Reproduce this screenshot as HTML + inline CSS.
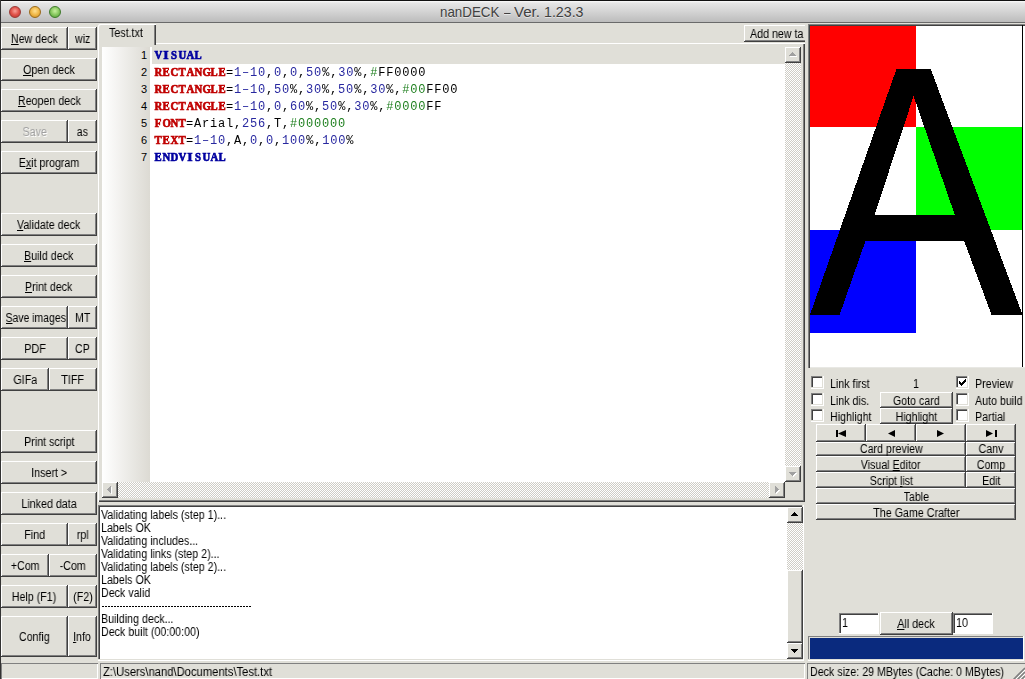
<!DOCTYPE html><html><head><meta charset="utf-8"><style>
*{box-sizing:border-box}
html,body{margin:0;padding:0;width:1025px;height:679px;overflow:hidden;-webkit-font-smoothing:antialiased;background:#e0dfd8;font-family:"Liberation Sans",sans-serif;font-size:12px;color:#000}
.b,.t,.cb,.p{position:absolute}
.t,.s,.code{will-change:transform}
.b{background:#e0dfd8;text-align:center;padding-top:1px;white-space:nowrap;overflow:hidden;
box-shadow:inset -1px -1px #404040, inset 1px 1px #fff, inset -2px -2px #808080}
.b u{text-decoration:underline;text-underline-offset:1px}
.s{display:inline-block;transform:scaleX(0.89);transform-origin:50% 50%}
.dis{color:#a0a0a0;text-shadow:1px 1px #fff}
.t{white-space:nowrap;transform:scaleX(0.89);transform-origin:0 0}
.cb{width:13px;height:13px;background:#fff;box-shadow:inset -1px -1px #fff, inset -2px -2px #e0dfd8, inset 1px 1px #808080, inset 2px 2px #404040}
.code{font-family:"Liberation Mono",monospace;font-size:12px;letter-spacing:0.8px;position:absolute;white-space:pre;line-height:17px}
.kw i{font-style:normal;display:inline-block;width:8px;text-align:center;font-family:"Liberation Serif",serif;font-weight:bold;font-size:12.5px;letter-spacing:0;-webkit-text-stroke:0.7px currentColor;transform:scaleX(0.86);vertical-align:top;line-height:17px;position:relative;top:-1px}
</style></head><body>
<div class="b" style="left:1px;top:27px;width:67px;height:23px;line-height:23px;"><span class="s"><u>N</u>ew deck</span></div>
<div class="b" style="left:68px;top:27px;width:29px;height:23px;line-height:23px;"><span class="s">wiz</span></div>
<div class="b" style="left:1px;top:58px;width:96px;height:23px;line-height:23px;"><span class="s"><u>O</u>pen deck</span></div>
<div class="b" style="left:1px;top:89px;width:96px;height:23px;line-height:23px;"><span class="s"><u>R</u>eopen deck</span></div>
<div class="b dis" style="left:1px;top:120px;width:67px;height:23px;line-height:23px;"><span class="s">Save</span></div>
<div class="b" style="left:68px;top:120px;width:29px;height:23px;line-height:23px;"><span class="s">as</span></div>
<div class="b" style="left:1px;top:151px;width:96px;height:23px;line-height:23px;"><span class="s">E<u>x</u>it program</span></div>
<div class="b" style="left:1px;top:213px;width:96px;height:23px;line-height:23px;"><span class="s"><u>V</u>alidate deck</span></div>
<div class="b" style="left:1px;top:244px;width:96px;height:23px;line-height:23px;"><span class="s"><u>B</u>uild deck</span></div>
<div class="b" style="left:1px;top:275px;width:96px;height:23px;line-height:23px;"><span class="s"><u>P</u>rint deck</span></div>
<div class="b" style="left:1px;top:306px;width:67px;height:23px;line-height:23px;"><span class="s" style="transform:scaleX(0.87)"><u>S</u>ave images</span></div>
<div class="b" style="left:68px;top:306px;width:29px;height:23px;line-height:23px;"><span class="s">MT</span></div>
<div class="b" style="left:1px;top:337px;width:67px;height:23px;line-height:23px;"><span class="s">PDF</span></div>
<div class="b" style="left:68px;top:337px;width:29px;height:23px;line-height:23px;"><span class="s">CP</span></div>
<div class="b" style="left:1px;top:368px;width:48px;height:23px;line-height:23px;"><span class="s">GIFa</span></div>
<div class="b" style="left:49px;top:368px;width:48px;height:23px;line-height:23px;"><span class="s">TIFF</span></div>
<div class="b" style="left:1px;top:430px;width:96px;height:23px;line-height:23px;"><span class="s">Print script</span></div>
<div class="b" style="left:1px;top:461px;width:96px;height:23px;line-height:23px;"><span class="s">Insert &gt;</span></div>
<div class="b" style="left:1px;top:492px;width:96px;height:23px;line-height:23px;"><span class="s">Linked data</span></div>
<div class="b" style="left:1px;top:523px;width:67px;height:23px;line-height:23px;"><span class="s">Find</span></div>
<div class="b" style="left:68px;top:523px;width:29px;height:23px;line-height:23px;"><span class="s">rpl</span></div>
<div class="b" style="left:1px;top:554px;width:48px;height:23px;line-height:23px;"><span class="s">+Com</span></div>
<div class="b" style="left:49px;top:554px;width:48px;height:23px;line-height:23px;"><span class="s">-Com</span></div>
<div class="b" style="left:1px;top:585px;width:67px;height:23px;line-height:23px;"><span class="s">Help (F1)</span></div>
<div class="b" style="left:68px;top:585px;width:29px;height:23px;line-height:23px;"><span class="s">(F2)</span></div>
<div class="b" style="left:1px;top:616px;width:67px;height:41px;line-height:41px;"><span class="s">Config</span></div>
<div class="b" style="left:68px;top:616px;width:29px;height:41px;line-height:41px;"><span class="s"><u>I</u>nfo</span></div>
<div class="p" style="left:0;top:0;width:1025px;height:23px;background:linear-gradient(#fbfbfb 0,#e6e6e6 2px,#d4d4d4 50%,#bcbcbc 100%);border-top:1px solid #111;border-bottom:1px solid #6a6a6a"></div>
<div class="p" style="left:0;top:0;width:1px;height:679px;background:#333"></div>
<div class="p" style="left:9px;top:6px;width:12px;height:12px;border-radius:50%;border:1px solid #9a3a36;background:radial-gradient(circle at 50% 40%,#f8a098 0,#e0524a 50%,#b8302a 100%)"></div>
<div class="p" style="left:29px;top:6px;width:12px;height:12px;border-radius:50%;border:1px solid #9a6a1a;background:radial-gradient(circle at 50% 40%,#ffe090 0,#f0b848 50%,#c88a20 100%)"></div>
<div class="p" style="left:49px;top:6px;width:12px;height:12px;border-radius:50%;border:1px solid #3e7a2a;background:radial-gradient(circle at 50% 40%,#c8f0a0 0,#88c860 50%,#4c9a34 100%)"></div>
<div style="position:absolute;top:4px;font-size:14.5px;color:#404040;white-space:nowrap;text-shadow:0 1px rgba(255,255,255,.55);transform-origin:0 0;left:440px;transform:scaleX(0.92)">nanDECK</div><div style="position:absolute;top:4px;font-size:14.5px;color:#404040;white-space:nowrap;text-shadow:0 1px rgba(255,255,255,.55);transform-origin:0 0;left:504px;transform:scaleX(0.8)">–</div><div style="position:absolute;top:4px;font-size:14.5px;color:#404040;white-space:nowrap;text-shadow:0 1px rgba(255,255,255,.55);transform-origin:0 0;left:514px;transform:scaleX(1.04)">Ver.</div><div style="position:absolute;top:4px;font-size:14.5px;color:#404040;white-space:nowrap;text-shadow:0 1px rgba(255,255,255,.55);transform-origin:0 0;left:544px;transform:scaleX(0.98)">1.23.3</div>

<div class="p" style="left:98px;top:43px;width:707px;height:459px;box-shadow:inset 1px 1px #fff, inset -1px -1px #404040, inset -2px -2px #808080"></div>
<div class="p" style="left:98px;top:24px;width:58px;height:21px;border-top-left-radius:2px;background:#e0dfd8;box-shadow:inset 1px 1px #fff, inset -1px 0 #404040, inset -2px 0 #808080"></div>
<div class="t" style="left:109px;top:26px">Test.txt</div>

<div class="p" style="left:744px;top:25px;width:61px;height:17px;overflow:hidden"><div class="b" style="left:0;top:0;width:75px;height:17px;line-height:17px;text-align:left;padding-left:6px"><span class="s" style="transform-origin:0 50%">Add new ta</span></div></div>
<div class="p" style="left:102px;top:47px;width:683px;height:435px;background:#fff"></div>
<div class="p" style="left:102px;top:47px;width:48px;height:435px;background:linear-gradient(90deg,#fff,#dcdad3)"></div>
<div class="p" style="left:152px;top:47px;width:633px;height:17px;background:#e0dfd8"></div>

<div class="p" style="left:120px;top:47px;width:27px;text-align:right;font-size:11px;line-height:17px">1</div>
<div class="p" style="left:120px;top:64px;width:27px;text-align:right;font-size:11px;line-height:17px">2</div>
<div class="p" style="left:120px;top:81px;width:27px;text-align:right;font-size:11px;line-height:17px">3</div>
<div class="p" style="left:120px;top:98px;width:27px;text-align:right;font-size:11px;line-height:17px">4</div>
<div class="p" style="left:120px;top:115px;width:27px;text-align:right;font-size:11px;line-height:17px">5</div>
<div class="p" style="left:120px;top:132px;width:27px;text-align:right;font-size:11px;line-height:17px">6</div>
<div class="p" style="left:120px;top:149px;width:27px;text-align:right;font-size:11px;line-height:17px">7</div>
<div class="code" style="left:154px;top:48px"><span class="kw" style="color:#0000a0"><i>V</i><i style="transform:scaleX(1.1)">I</i><i>S</i><i>U</i><i>A</i><i>L</i></span>
<span class="kw" style="color:#c00000"><i>R</i><i>E</i><i>C</i><i>T</i><i>A</i><i>N</i><i>G</i><i>L</i><i>E</i></span>=<span style="color:#2828a0">1–10</span>,<span style="color:#2828a0">0</span>,<span style="color:#2828a0">0</span>,<span style="color:#2828a0">50</span>%,<span style="color:#2828a0">30</span>%,<span style="color:#208020">#</span>FF0000
<span class="kw" style="color:#c00000"><i>R</i><i>E</i><i>C</i><i>T</i><i>A</i><i>N</i><i>G</i><i>L</i><i>E</i></span>=<span style="color:#2828a0">1–10</span>,<span style="color:#2828a0">50</span>%,<span style="color:#2828a0">30</span>%,<span style="color:#2828a0">50</span>%,<span style="color:#2828a0">30</span>%,<span style="color:#208020">#00</span>FF00
<span class="kw" style="color:#c00000"><i>R</i><i>E</i><i>C</i><i>T</i><i>A</i><i>N</i><i>G</i><i>L</i><i>E</i></span>=<span style="color:#2828a0">1–10</span>,<span style="color:#2828a0">0</span>,<span style="color:#2828a0">60</span>%,<span style="color:#2828a0">50</span>%,<span style="color:#2828a0">30</span>%,<span style="color:#208020">#0000</span>FF
<span class="kw" style="color:#c00000"><i>F</i><i>O</i><i>N</i><i>T</i></span>=Arial,<span style="color:#2828a0">256</span>,T,<span style="color:#208020">#000000</span>
<span class="kw" style="color:#c00000"><i>T</i><i>E</i><i>X</i><i>T</i></span>=<span style="color:#2828a0">1–10</span>,A,<span style="color:#2828a0">0</span>,<span style="color:#2828a0">0</span>,<span style="color:#2828a0">100</span>%,<span style="color:#2828a0">100</span>%
<span class="kw" style="color:#0000a0"><i>E</i><i>N</i><i>D</i><i>V</i><i style="transform:scaleX(1.1)">I</i><i>S</i><i>U</i><i>A</i><i>L</i></span></div>
<div class="p" style="left:785px;top:47px;width:16px;height:435px;background-color:#e8e7e2;background-image:repeating-conic-gradient(#cfcdc6 0 25%, #fff 0 50%);background-size:2px 2px"></div>
<div class="p" style="left:102px;top:482px;width:683px;height:16px;background-color:#e8e7e2;background-image:repeating-conic-gradient(#cfcdc6 0 25%, #fff 0 50%);background-size:2px 2px"></div>
<div class="p" style="left:785px;top:482px;width:16px;height:16px;background:#e0dfd8"></div>
<div class="b" style="left:785px;top:47px;width:16px;height:16px"><svg width="16" height="16" style="position:absolute;left:0;top:0" shape-rendering="crispEdges"><g fill="#fff"><rect x="8" y="6" width="1" height="1"/><rect x="7" y="7" width="3" height="1"/><rect x="6" y="8" width="5" height="1"/><rect x="5" y="9" width="7" height="1"/></g><g fill="#a0a0a0"><rect x="7" y="5" width="1" height="1"/><rect x="6" y="6" width="3" height="1"/><rect x="5" y="7" width="5" height="1"/><rect x="4" y="8" width="7" height="1"/></g></svg></div>
<div class="b" style="left:785px;top:466px;width:16px;height:16px"><svg width="16" height="16" style="position:absolute;left:0;top:0" shape-rendering="crispEdges"><g fill="#fff"><rect x="8" y="10" width="1" height="1"/><rect x="7" y="9" width="3" height="1"/><rect x="6" y="8" width="5" height="1"/><rect x="5" y="7" width="7" height="1"/></g><g fill="#a0a0a0"><rect x="7" y="9" width="1" height="1"/><rect x="6" y="8" width="3" height="1"/><rect x="5" y="7" width="5" height="1"/><rect x="4" y="6" width="7" height="1"/></g></svg></div>
<div class="b" style="left:102px;top:482px;width:16px;height:16px"><svg width="16" height="16" style="position:absolute;left:0;top:0" shape-rendering="crispEdges"><g fill="#fff"><rect x="6" y="8" width="1" height="1"/><rect x="7" y="7" width="1" height="3"/><rect x="8" y="6" width="1" height="5"/><rect x="9" y="5" width="1" height="7"/></g><g fill="#a0a0a0"><rect x="5" y="7" width="1" height="1"/><rect x="6" y="6" width="1" height="3"/><rect x="7" y="5" width="1" height="5"/><rect x="8" y="4" width="1" height="7"/></g></svg></div>
<div class="b" style="left:769px;top:482px;width:16px;height:16px"><svg width="16" height="16" style="position:absolute;left:0;top:0" shape-rendering="crispEdges"><g fill="#fff"><rect x="10" y="8" width="1" height="1"/><rect x="9" y="7" width="1" height="3"/><rect x="8" y="6" width="1" height="5"/><rect x="7" y="5" width="1" height="7"/></g><g fill="#a0a0a0"><rect x="9" y="7" width="1" height="1"/><rect x="8" y="6" width="1" height="3"/><rect x="7" y="5" width="1" height="5"/><rect x="6" y="4" width="1" height="7"/></g></svg></div>
<div class="p" style="left:98px;top:505px;width:706px;height:156px;background:#fff;box-shadow:inset -1px -1px #fff, inset -2px -2px #e0dfd8, inset 1px 1px #808080, inset 2px 2px #404040"></div>
<div class="t" style="left:101px;top:509px;line-height:13px">Validating labels (step 1)...</div>
<div class="t" style="left:101px;top:522px;line-height:13px">Labels OK</div>
<div class="t" style="left:101px;top:535px;line-height:13px">Validating includes...</div>
<div class="t" style="left:101px;top:548px;line-height:13px">Validating links (step 2)...</div>
<div class="t" style="left:101px;top:561px;line-height:13px">Validating labels (step 2)...</div>
<div class="t" style="left:101px;top:574px;line-height:13px">Labels OK</div>
<div class="t" style="left:101px;top:587px;line-height:13px">Deck valid</div>
<div class="t" style="left:101px;top:600px;line-height:13px"></div>
<div class="t" style="left:101px;top:613px;line-height:13px">Building deck...</div>
<div class="t" style="left:101px;top:626px;line-height:13px">Deck built (00:00:00)</div>
<div class="p" style="left:102px;top:606px;width:149px;height:1px;background:repeating-linear-gradient(90deg,#000 0 2px,transparent 2px 3px)"></div>
<div class="p" style="left:787px;top:523px;width:16px;height:120px;background-color:#e8e7e2;background-image:repeating-conic-gradient(#cfcdc6 0 25%, #fff 0 50%);background-size:2px 2px"></div>
<div class="b" style="left:787px;top:570px;width:16px;height:73px"></div>
<div class="b" style="left:787px;top:507px;width:16px;height:16px"><svg width="16" height="16" style="position:absolute;left:0;top:0" shape-rendering="crispEdges"><g fill="#000"><rect x="7" y="5" width="1" height="1"/><rect x="6" y="6" width="3" height="1"/><rect x="5" y="7" width="5" height="1"/><rect x="4" y="8" width="7" height="1"/></g></svg></div>
<div class="b" style="left:787px;top:643px;width:16px;height:16px"><svg width="16" height="16" style="position:absolute;left:0;top:0" shape-rendering="crispEdges"><g fill="#000"><rect x="7" y="9" width="1" height="1"/><rect x="6" y="8" width="3" height="1"/><rect x="5" y="7" width="5" height="1"/><rect x="4" y="6" width="7" height="1"/></g></svg></div>
<div class="p" style="left:1px;top:663px;width:97px;height:16px;box-shadow:inset 1px 1px #808080, inset -1px -1px #fff"></div>
<div class="p" style="left:100px;top:663px;width:705px;height:16px;box-shadow:inset 1px 1px #808080, inset -1px -1px #fff"></div>
<div class="p" style="left:807px;top:663px;width:218px;height:16px;box-shadow:inset 1px 1px #808080"></div>
<svg class="p" style="left:1012px;top:667px" width="14" height="14"><path d="M13 1 L1 13 M13 5 L5 13 M13 9 L9 13" stroke="#808080" stroke-width="1.6"/><path d="M14 2 L2 14 M14 6 L6 14 M14 10 L10 14" stroke="#fff" stroke-width="1"/></svg>

<div class="t" style="left:103px;top:665px;line-height:15px;transform:scaleX(0.935)">Z:\Users\nand\Documents\Test.txt</div>
<div class="t" style="left:810px;top:665px;line-height:15px">Deck size: 29 MBytes (Cache: 0 MBytes)</div>
<div class="p" style="left:808px;top:24px;width:217px;height:344px;background:#fff;box-shadow:inset 1px 1px #808080, inset 2px 2px #404040, inset 0 -1px #e8e8e4"></div>
<div class="p" style="left:1022px;top:25px;width:1px;height:342px;background:#000"></div>
<div class="p" style="left:810px;top:26px;width:106px;height:101px;background:#f00"></div>
<div class="p" style="left:916px;top:127px;width:106px;height:103px;background:#0f0"></div>
<div class="p" style="left:810px;top:230px;width:106px;height:103px;background:#00f"></div>
<svg class="p" style="left:810px;top:26px" width="212" height="341"><path d="M0 288.7 L86.4 43.2 L120.8 43.2 L212.5 288.7 L181.5 288.7 L154 214.6 L55.6 214.6 L29.7 288.7 Z M64.7 188.7 L103.6 70 L144.7 188.7 Z" fill="#000" fill-rule="evenodd" shape-rendering="crispEdges"/></svg>

<div class="cb" style="left:811px;top:376px"></div>
<div class="t" style="left:830px;top:378px;line-height:13px">Link first</div>
<div class="t" style="left:913px;top:378px;line-height:13px">1</div>
<div class="cb" style="left:956px;top:376px"><svg width="13" height="13" style="position:absolute;left:0;top:0" shape-rendering="crispEdges" fill="#000"><rect x="9" y="3" width="1" height="1"/><rect x="8" y="4" width="1" height="1"/><rect x="9" y="4" width="1" height="1"/><rect x="3" y="5" width="1" height="1"/><rect x="7" y="5" width="1" height="1"/><rect x="8" y="5" width="1" height="1"/><rect x="9" y="5" width="1" height="1"/><rect x="3" y="6" width="1" height="1"/><rect x="4" y="6" width="1" height="1"/><rect x="6" y="6" width="1" height="1"/><rect x="7" y="6" width="1" height="1"/><rect x="8" y="6" width="1" height="1"/><rect x="3" y="7" width="1" height="1"/><rect x="4" y="7" width="1" height="1"/><rect x="5" y="7" width="1" height="1"/><rect x="6" y="7" width="1" height="1"/><rect x="7" y="7" width="1" height="1"/><rect x="4" y="8" width="1" height="1"/><rect x="5" y="8" width="1" height="1"/><rect x="6" y="8" width="1" height="1"/><rect x="5" y="9" width="1" height="1"/></svg></div>
<div class="t" style="left:975px;top:378px;line-height:13px">Preview</div>
<div class="cb" style="left:811px;top:393px"></div>
<div class="t" style="left:830px;top:395px;line-height:13px">Link dis.</div>
<div class="b" style="left:880px;top:392px;width:73px;height:16px;line-height:16px;"><span class="s">Goto card</span></div>
<div class="cb" style="left:956px;top:393px"></div>
<div class="t" style="left:975px;top:395px;line-height:13px">Auto build</div>
<div class="cb" style="left:811px;top:409px"></div>
<div class="t" style="left:830px;top:411px;line-height:13px">Highlight</div>
<div class="b" style="left:880px;top:408px;width:73px;height:16px;line-height:16px;"><span class="s">Highlight</span></div>
<div class="cb" style="left:956px;top:409px"></div>
<div class="t" style="left:975px;top:411px;line-height:13px">Partial</div>
<div class="b" style="left:816px;top:424px;width:50px;height:18px"></div>
<div class="b" style="left:866px;top:424px;width:50px;height:18px"></div>
<div class="b" style="left:916px;top:424px;width:50px;height:18px"></div>
<div class="b" style="left:966px;top:424px;width:50px;height:18px"></div>
<svg class="p" style="left:816px;top:424px" width="200" height="18">
<rect x="20" y="6" width="2" height="7" fill="#000"/><path d="M22 9.5 L30 6 L30 13 Z" fill="#000"/>
<path d="M72 9.5 L79 6 L79 13 Z" fill="#000"/>
<path d="M121 6 L128 9.5 L121 13 Z" fill="#000"/>
<path d="M170 6 L177 9.5 L170 13 Z" fill="#000"/><rect x="179" y="6" width="2" height="7" fill="#000"/>
</svg>
<div class="b" style="left:816px;top:442px;width:150px;height:14px;line-height:14px;padding-top:0;"><span class="s">Card preview</span></div>
<div class="b" style="left:966px;top:442px;width:50px;height:14px;line-height:14px;padding-top:0;"><span class="s">Canv</span></div>
<div class="b" style="left:816px;top:456px;width:150px;height:16px;line-height:16px;"><span class="s">Visual <u>E</u>ditor</span></div>
<div class="b" style="left:966px;top:456px;width:50px;height:16px;line-height:16px;"><span class="s">Comp</span></div>
<div class="b" style="left:816px;top:472px;width:150px;height:16px;line-height:16px;"><span class="s">Script <u>l</u>ist</span></div>
<div class="b" style="left:966px;top:472px;width:50px;height:16px;line-height:16px;"><span class="s">Edit</span></div>
<div class="b" style="left:816px;top:488px;width:200px;height:16px;line-height:16px;"><span class="s">Table</span></div>
<div class="b" style="left:816px;top:504px;width:200px;height:16px;line-height:16px;"><span class="s">The Game Crafter</span></div>
<div class="p" style="left:839px;top:613px;width:40px;height:21px;background:#fff;box-shadow:inset -1px -1px #fff, inset 1px 1px #808080, inset 2px 2px #404040"></div>
<div class="t" style="left:842px;top:617px;line-height:13px">1</div>
<div class="b" style="left:880px;top:612px;width:73px;height:23px;line-height:23px;"><span class="s"><u>A</u>ll deck</span></div>
<div class="p" style="left:953px;top:613px;width:40px;height:21px;background:#fff;box-shadow:inset -1px -1px #fff, inset 1px 1px #808080, inset 2px 2px #404040"></div>
<div class="t" style="left:956px;top:617px;line-height:13px">10</div>
<div class="p" style="left:808px;top:636px;width:216px;height:25px;background:#0a2a7e;box-shadow:inset -1px -1px #fff, inset 0 -2px #e0dfd8, inset 1px 1px #808080, inset 2px 2px #e0dfd8"></div>
</body></html>
